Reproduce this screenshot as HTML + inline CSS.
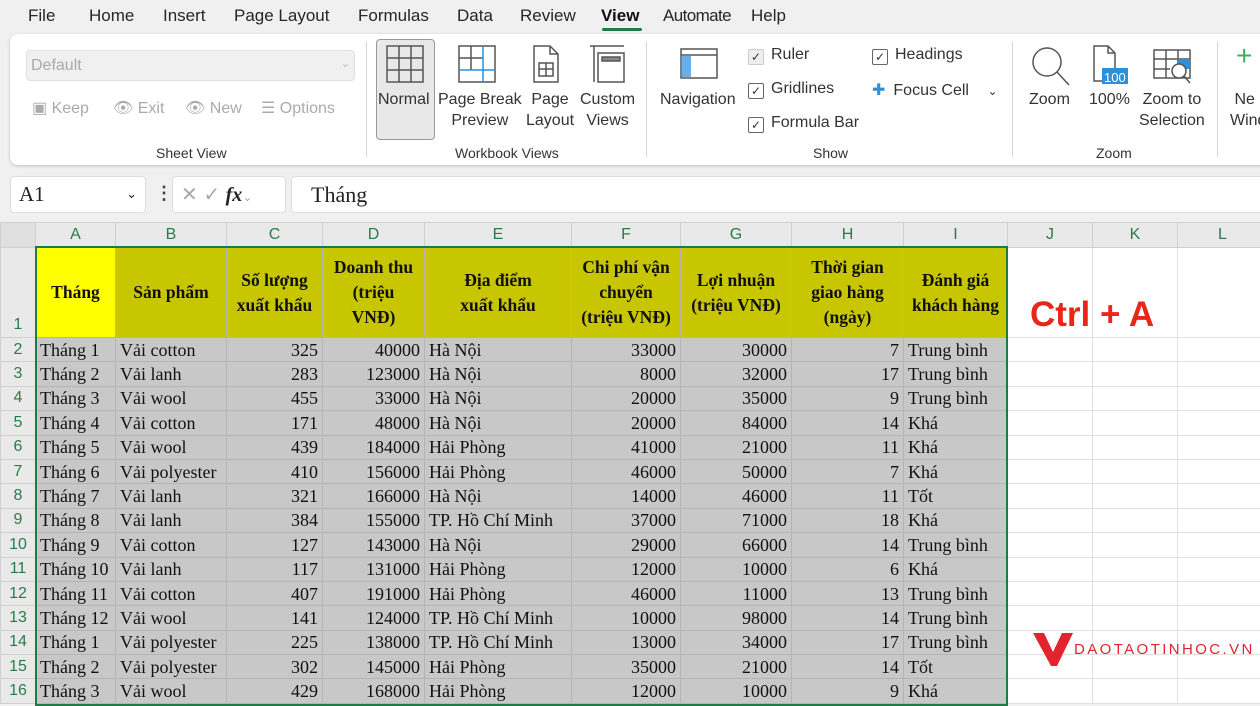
<!DOCTYPE html>
<html><head><meta charset="utf-8"><style>
*{box-sizing:border-box;margin:0;padding:0}
body{width:1260px;height:700px;overflow:hidden;background:#f0f0f0;font-family:"Liberation Sans",sans-serif;position:relative;color:#222}
.a{position:absolute}
.tab{position:absolute;top:6px;font-size:17px;color:#262626}
.rib{position:absolute;left:10px;top:34px;width:1270px;height:131px;background:#fff;border-radius:8px;box-shadow:0 1px 3px rgba(0,0,0,.2)}
.lbl{position:absolute;font-size:14px;color:#333;text-align:center}
.bt{position:absolute;font-size:16px;color:#333;text-align:center;line-height:21px}
.dis{color:#aaa}
.sep{position:absolute;top:42px;width:1px;height:115px;background:#d6d6d6}
.cb{position:absolute;font-size:16px;color:#333}
.cb i{display:inline-block;width:16px;height:16px;border:1px solid #666;border-radius:2px;vertical-align:-2px;margin-right:7px;font-style:normal;font-size:12px;line-height:14px;text-align:center}
table{position:absolute;left:0;top:222px;width:1267px;border-collapse:collapse;table-layout:fixed;font-family:"Liberation Serif",serif;font-size:18px;color:#111}
td{border:1px solid #b4b4b4;height:24.4px;padding:0 4px;white-space:nowrap;overflow:hidden;background:#c8c8c8;line-height:22px}
td.r{text-align:right}
td.h{background:#e9e9e9;color:#2b7a4b;font-family:"Liberation Sans",sans-serif;font-size:16px;text-align:center;border-color:#d0d0d0}
td.rh{background:#e9e9e9;color:#2b7a4b;font-family:"Liberation Sans",sans-serif;font-size:16px;text-align:center;border-color:#d0d0d0;padding:0}
td.w{background:#fff;border-color:#e0e0e0}
tr.hd td{height:25px}
tr.one td{height:90px;background:#c8c600;font-weight:bold;text-align:center;font-size:17.5px;line-height:25px;padding:0 1px}
tr.one td.rh{background:#e9e9e9;font-weight:normal;vertical-align:bottom;font-size:16px}
tr.one td.w{background:#fff}
</style></head><body>
<div class="tab" style="left:28px">File</div>
<div class="tab" style="left:89px">Home</div>
<div class="tab" style="left:163px">Insert</div>
<div class="tab" style="left:234px">Page Layout</div>
<div class="tab" style="left:358px">Formulas</div>
<div class="tab" style="left:457px">Data</div>
<div class="tab" style="left:520px">Review</div>
<div class="tab" style="left:601px;color:#111;font-weight:bold">View</div>
<div class="a" style="left:602px;top:28px;width:40px;height:3px;background:#1f7a45;border-radius:2px"></div>
<div class="tab" style="left:663px;letter-spacing:-0.6px">Automate</div>
<div class="tab" style="left:751px">Help</div>
<div class="rib"></div>
<div class="a" style="left:26px;top:50px;width:329px;height:31px;background:#f0f0f0;border:1px solid #e0e0e0;border-radius:4px;font-size:16px;color:#aaa;padding:6px 4px">Default<span style="float:right;font-size:11px;color:#bbb">⌄</span></div>
<div class="bt dis" style="left:32px;top:98px">▣ Keep</div>
<div class="bt dis" style="left:113px;top:98px">👁 Exit</div>
<div class="bt dis" style="left:185px;top:98px">👁 New</div>
<div class="bt dis" style="left:261px;top:98px">☰ Options</div>
<div class="lbl" style="left:156px;top:145px">Sheet View</div>
<div class="sep" style="left:366px"></div>
<div class="a" style="left:376px;top:39px;width:59px;height:101px;background:#e8e8e8;border:1px solid #999;border-radius:4px"></div>
<svg class="a" style="left:386px;top:45px" width="240" height="40" viewBox="0 0 240 40" fill="none" stroke="#555" stroke-width="1.5">
<rect x="1" y="1" width="36" height="36"/><path d="M13 1V37M25 1V37M1 13H37M1 25H37"/>
<rect x="73" y="1" width="36" height="36"/><path d="M85 1V25M73 13H97"/><path d="M97 1V37M73 25H109" stroke="#2f8fd8"/>
<path d="M148 1H164L172 9V37H148Z M164 1V9H172"/><rect x="153" y="18" width="14" height="13"/><path d="M153 24H167M160 18V31"/>
<path d="M204 1H238M208 1V37"/><rect x="212" y="8" width="26" height="29"/><rect x="216" y="12" width="18" height="4" fill="#888"/>
</svg>
<div class="bt" style="left:378px;top:89px">Normal</div>
<div class="bt" style="left:438px;top:89px">Page Break<br>Preview</div>
<div class="bt" style="left:526px;top:89px">Page<br>Layout</div>
<div class="bt" style="left:580px;top:89px">Custom<br>Views</div>
<div class="lbl" style="left:455px;top:145px">Workbook Views</div>
<div class="sep" style="left:646px"></div>
<svg class="a" style="left:680px;top:48px" width="40" height="32"><rect x="1" y="1" width="36" height="29" fill="none" stroke="#555" stroke-width="1.5"/><path d="M1 7H37" stroke="#555" stroke-width="1.5"/><rect x="2" y="8" width="9" height="21" fill="#6aaee8"/></svg>
<div class="bt" style="left:660px;top:89px">Navigation</div>
<div class="cb dis" style="left:748px;top:46px"><i style="border-color:#ccc;background:#eee">✓</i>Ruler</div>
<div class="cb" style="left:748px;top:80px"><i>✓</i>Gridlines</div>
<div class="cb" style="left:748px;top:114px"><i>✓</i>Formula Bar</div>
<div class="cb" style="left:872px;top:46px"><i>✓</i>Headings</div>
<div class="cb" style="left:872px;top:80px"><span style="color:#2f8fd8;margin-right:8px">✚</span>Focus Cell <span style="margin-left:14px;font-size:12px">⌄</span></div>
<div class="lbl" style="left:813px;top:145px">Show</div>
<div class="sep" style="left:1012px"></div>
<svg class="a" style="left:1030px;top:45px" width="180" height="42" fill="none" stroke="#555" stroke-width="1.5">
<circle cx="17" cy="17" r="14"/><path d="M27 27L39 40"/>
<path d="M64 1H78L85 8V36H64Z M78 1V8H85"/><rect x="72" y="23" width="26" height="16" fill="#2f8fd8" stroke="none"/><text x="74" y="37" font-size="13" fill="#fff" stroke="none" font-family="Liberation Sans">100</text>
<rect x="124" y="5" width="36" height="28"/><path d="M124 14H160M136 5V33M148 5V24M124 24H140"/><rect x="148" y="14" width="12" height="10" fill="#2f8fd8" stroke="none"/><circle cx="149" cy="26" r="7" fill="#fff"/><path d="M154 31L160 38"/>
</svg>
<div class="bt" style="left:1029px;top:89px">Zoom</div>
<div class="bt" style="left:1089px;top:89px">100%</div>
<div class="bt" style="left:1139px;top:89px">Zoom to<br>Selection</div>
<div class="lbl" style="left:1096px;top:145px">Zoom</div>
<div class="sep" style="left:1217px"></div>
<div class="a" style="left:1236px;top:42px;color:#3bb05c;font-size:28px;line-height:28px">+</div>
<div class="bt" style="left:1230px;top:89px;text-align:left">&nbsp;Ne<br>Wind</div>
<div class="a" style="left:10px;top:176px;width:136px;height:37px;background:#fff;border:1px solid #ddd;border-radius:4px;font-family:'Liberation Serif',serif;font-size:21px;padding:5px 8px">A1<span style="position:absolute;right:8px;top:9px;font-size:13px;font-family:'Liberation Sans'">⌄</span></div>
<div class="a" style="left:155px;top:183px;font-size:18px;font-weight:bold;color:#444">⋮</div>
<div class="a" style="left:172px;top:176px;width:114px;height:37px;background:#fff;border:1px solid #ddd;border-radius:4px;font-size:20px;color:#aaa;padding:5px 8px">✕ ✓ <span style="color:#222;font-family:'Liberation Serif';font-style:italic;font-weight:bold">fx</span><span style="font-size:12px">⌄</span></div>
<div class="a" style="left:291px;top:176px;width:980px;height:37px;background:#fff;border:1px solid #ddd;border-radius:4px;font-family:'Liberation Serif',serif;font-size:22px;padding:5px 19px">Tháng</div>
<table>
<colgroup><col style="width:35px"><col style="width:80px"><col style="width:111px"><col style="width:96px"><col style="width:102px"><col style="width:147px"><col style="width:109px"><col style="width:111px"><col style="width:112px"><col style="width:104px"><col style="width:85px"><col style="width:85px"><col style="width:90px"></colgroup>
<tr class="hd"><td class="h" style="background:#e0e0e0"></td><td class="h">A</td><td class="h">B</td><td class="h">C</td><td class="h">D</td><td class="h">E</td><td class="h">F</td><td class="h">G</td><td class="h">H</td><td class="h">I</td><td class="h">J</td><td class="h">K</td><td class="h">L</td></tr>
<tr class="one"><td class="rh">1</td><td style="background:#ffff00">Tháng</td><td>Sản phẩm</td><td>Số lượng<br>xuất khẩu</td><td>Doanh thu<br>(triệu<br>VNĐ)</td><td>Địa điểm<br>xuất khẩu</td><td>Chi phí vận<br>chuyển<br>(triệu VNĐ)</td><td>Lợi nhuận<br>(triệu VNĐ)</td><td>Thời gian<br>giao hàng<br>(ngày)</td><td>Đánh giá<br>khách hàng</td><td class="w"></td><td class="w"></td><td class="w"></td></tr>
<tr><td class="rh">2</td><td>Tháng 1</td><td>Vải cotton</td><td class="r">325</td><td class="r">40000</td><td>Hà Nội</td><td class="r">33000</td><td class="r">30000</td><td class="r">7</td><td>Trung bình</td><td class="w"></td><td class="w"></td><td class="w"></td></tr>
<tr><td class="rh">3</td><td>Tháng 2</td><td>Vải lanh</td><td class="r">283</td><td class="r">123000</td><td>Hà Nội</td><td class="r">8000</td><td class="r">32000</td><td class="r">17</td><td>Trung bình</td><td class="w"></td><td class="w"></td><td class="w"></td></tr>
<tr><td class="rh">4</td><td>Tháng 3</td><td>Vải wool</td><td class="r">455</td><td class="r">33000</td><td>Hà Nội</td><td class="r">20000</td><td class="r">35000</td><td class="r">9</td><td>Trung bình</td><td class="w"></td><td class="w"></td><td class="w"></td></tr>
<tr><td class="rh">5</td><td>Tháng 4</td><td>Vải cotton</td><td class="r">171</td><td class="r">48000</td><td>Hà Nội</td><td class="r">20000</td><td class="r">84000</td><td class="r">14</td><td>Khá</td><td class="w"></td><td class="w"></td><td class="w"></td></tr>
<tr><td class="rh">6</td><td>Tháng 5</td><td>Vải wool</td><td class="r">439</td><td class="r">184000</td><td>Hải Phòng</td><td class="r">41000</td><td class="r">21000</td><td class="r">11</td><td>Khá</td><td class="w"></td><td class="w"></td><td class="w"></td></tr>
<tr><td class="rh">7</td><td>Tháng 6</td><td>Vải polyester</td><td class="r">410</td><td class="r">156000</td><td>Hải Phòng</td><td class="r">46000</td><td class="r">50000</td><td class="r">7</td><td>Khá</td><td class="w"></td><td class="w"></td><td class="w"></td></tr>
<tr><td class="rh">8</td><td>Tháng 7</td><td>Vải lanh</td><td class="r">321</td><td class="r">166000</td><td>Hà Nội</td><td class="r">14000</td><td class="r">46000</td><td class="r">11</td><td>Tốt</td><td class="w"></td><td class="w"></td><td class="w"></td></tr>
<tr><td class="rh">9</td><td>Tháng 8</td><td>Vải lanh</td><td class="r">384</td><td class="r">155000</td><td>TP. Hồ Chí Minh</td><td class="r">37000</td><td class="r">71000</td><td class="r">18</td><td>Khá</td><td class="w"></td><td class="w"></td><td class="w"></td></tr>
<tr><td class="rh">10</td><td>Tháng 9</td><td>Vải cotton</td><td class="r">127</td><td class="r">143000</td><td>Hà Nội</td><td class="r">29000</td><td class="r">66000</td><td class="r">14</td><td>Trung bình</td><td class="w"></td><td class="w"></td><td class="w"></td></tr>
<tr><td class="rh">11</td><td>Tháng 10</td><td>Vải lanh</td><td class="r">117</td><td class="r">131000</td><td>Hải Phòng</td><td class="r">12000</td><td class="r">10000</td><td class="r">6</td><td>Khá</td><td class="w"></td><td class="w"></td><td class="w"></td></tr>
<tr><td class="rh">12</td><td>Tháng 11</td><td>Vải cotton</td><td class="r">407</td><td class="r">191000</td><td>Hải Phòng</td><td class="r">46000</td><td class="r">11000</td><td class="r">13</td><td>Trung bình</td><td class="w"></td><td class="w"></td><td class="w"></td></tr>
<tr><td class="rh">13</td><td>Tháng 12</td><td>Vải wool</td><td class="r">141</td><td class="r">124000</td><td>TP. Hồ Chí Minh</td><td class="r">10000</td><td class="r">98000</td><td class="r">14</td><td>Trung bình</td><td class="w"></td><td class="w"></td><td class="w"></td></tr>
<tr><td class="rh">14</td><td>Tháng 1</td><td>Vải polyester</td><td class="r">225</td><td class="r">138000</td><td>TP. Hồ Chí Minh</td><td class="r">13000</td><td class="r">34000</td><td class="r">17</td><td>Trung bình</td><td class="w"></td><td class="w"></td><td class="w"></td></tr>
<tr><td class="rh">15</td><td>Tháng 2</td><td>Vải polyester</td><td class="r">302</td><td class="r">145000</td><td>Hải Phòng</td><td class="r">35000</td><td class="r">21000</td><td class="r">14</td><td>Tốt</td><td class="w"></td><td class="w"></td><td class="w"></td></tr>
<tr><td class="rh">16</td><td>Tháng 3</td><td>Vải wool</td><td class="r">429</td><td class="r">168000</td><td>Hải Phòng</td><td class="r">12000</td><td class="r">10000</td><td class="r">9</td><td>Khá</td><td class="w"></td><td class="w"></td><td class="w"></td></tr>
</table>
<div class="a" style="left:35px;top:246px;width:973px;height:460px;border:2px solid #1f7a45"></div>
<div class="a" style="left:1030px;top:295px;font-size:35px;font-weight:bold;color:#e8261a;font-family:'Liberation Sans',sans-serif">Ctrl + A</div>
<svg class="a" style="left:1033px;top:631px" width="42" height="37"><path d="M0 2H11L20 21L29 2H40L24 35H18Z" fill="#e0252e"/><path d="M12 2H20L16 10Z" fill="#fff"/></svg>
<div class="a" style="left:1074px;top:641px;font-size:15px;color:#e0252e;letter-spacing:2.4px">DAOTAOTINHOC.VN</div>
</body></html>
